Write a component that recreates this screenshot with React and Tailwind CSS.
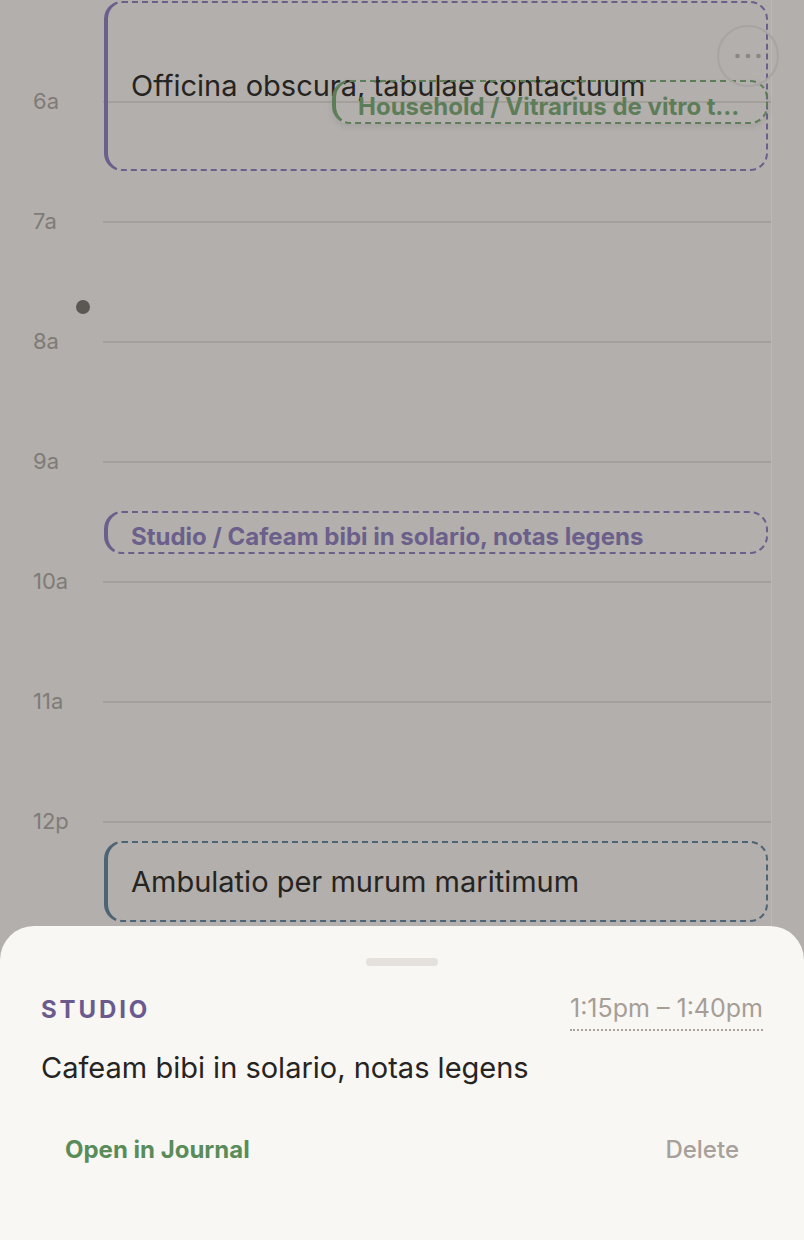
const hours = ["5a", "6a", "7a", "8a", "9a", "10a", "11a", "12p", "1p", "2p"];

function HourRow({ label }) {
  return (
    <div className="relative flex h-[120px]">
      <div className="w-[103px] shrink-0">
        <span className="block -translate-y-1/2 pl-[33px] text-[22px] leading-none text-[#7f7b77]">
          {label}
        </span>
      </div>
      <div className="mr-[32px] flex-1 border-t-2 border-[#a3a09c]" />
    </div>
  );
}

function EventBox({ top, height, left, color, children, className = "" }) {
  return (
    <div
      className={`absolute right-[36px] flex items-center rounded-[18px] border-2 border-dashed border-l-4 [border-left-style:solid] ${color} ${className}`}
      style={{ top, height, left }}
    >
      {children}
    </div>
  );
}

export default function App() {
  return (
    <div className="relative h-[1240px] w-full overflow-hidden bg-[#b3afac] font-['Inter','Noto_Sans',sans-serif]">
      {/* time grid */}
      <div className="relative -mt-[19px]">
        {hours.map((h) => (
          <HourRow key={h} label={h} />
        ))}
      </div>

      {/* right rail */}
      <div className="absolute top-0 right-[32px] h-full w-px bg-[#bdb9b6]" />

      {/* current time dot */}
      <div className="absolute top-[300px] left-[76px] h-[14px] w-[14px] rounded-full bg-[#5b5854]" />

      <EventBox top={1} height={170} left={104} color="border-[#6b5f8b]">
        <span className="pl-[23px] text-[29px] text-[#262422]">
          Officina obscura, tabulae contactuum
        </span>
      </EventBox>

      <EventBox
        top={80}
        height={44}
        left={332}
        color="border-[#5d7d59] shadow-[0_3px_6px_rgba(0,0,0,0.08)]"
        className="pt-[10px]"
      >
        <span className="truncate pr-[24px] pl-[22px] text-[24px] font-bold text-[#5d7d59]">
          Household / Vitrarius de vitro tegendo
        </span>
      </EventBox>

      <button className="absolute top-[25px] left-[717px] flex h-[62px] w-[62px] items-center justify-center rounded-full border-2 border-[#a8a4a1]">
        <svg width="30" height="8" viewBox="0 0 30 8" fill="#8a8682">
          <circle cx="4.5" cy="4" r="2.3" />
          <circle cx="15" cy="4" r="2.3" />
          <circle cx="25.5" cy="4" r="2.3" />
        </svg>
      </button>

      <EventBox top={511} height={43} left={104} color="border-[#6b5f8b]" className="pt-[8px]">
        <span className="pl-[23px] text-[24px] font-bold text-[#6b5f8b]">
          Studio / Cafeam bibi in solario, notas legens
        </span>
      </EventBox>

      <EventBox top={841} height={81} left={104} color="border-[#4d6475]">
        <span className="pl-[23px] text-[29px] text-[#262422]">
          Ambulatio per murum maritimum
        </span>
      </EventBox>

      {/* bottom sheet */}
      <div className="absolute inset-x-0 bottom-0 h-[314px] rounded-t-[34px] bg-[#f8f7f4] px-[41px]">
        <div className="flex justify-center pt-[32px]">
          <div className="h-[8px] w-[72px] rounded-full bg-[#e4e0db]" />
        </div>
        <div className="mt-[24px] flex items-center justify-between">
          <span className="text-[24px] font-bold tracking-[0.12em] text-[#6b5a8e]">STUDIO</span>
          <span className="border-b-2 border-dotted border-[#aaa29a] pb-[1px] text-[25px] text-[#a69e96]">
            1:15pm – 1:40pm
          </span>
        </div>
        <p className="mt-[15px] text-[29px] text-[#262422]">
          Cafeam bibi in solario, notas legens
        </p>
        <div className="mt-[43px] flex items-center justify-between px-[24px]">
          <button className="text-[24px] font-bold text-[#5a8c5a]">Open in Journal</button>
          <button className="text-[24px] font-medium text-[#a8a09a]">Delete</button>
        </div>
      </div>
    </div>
  );
}
